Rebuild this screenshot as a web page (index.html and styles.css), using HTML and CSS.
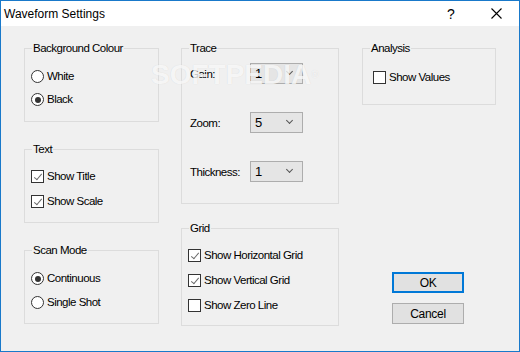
FILE: index.html
```html
<!DOCTYPE html>
<html lang="en">
<head>
    <meta charset="UTF-8">
    <title>Waveform Settings</title>
    <link rel="stylesheet" href="styles.css">
</head>
<body>
    <div class="window">
        <div class="titlebar">
            <span class="title">Waveform Settings</span>
            <span class="help">?</span>
            <span class="close">
                <svg width="11" height="11" viewBox="0 0 11 11">
                    <path d="M0.5 0.5 L10.5 10.5 M10.5 0.5 L0.5 10.5" stroke="#000" stroke-width="1.1" fill="none"/>
                </svg>
            </span>
        </div>

        <div class="content">
            <!-- left column -->
            <div class="col col-left">
                <div class="group group-bg">
                    <span class="group-title">Background Colour</span>
                    <label class="option"><span class="radio"></span>White</label>
                    <label class="option"><span class="radio checked"></span>Black</label>
                </div>
                <div class="group group-text">
                    <span class="group-title">Text</span>
                    <label class="option"><span class="check checked"></span>Show Title</label>
                    <label class="option"><span class="check checked"></span>Show Scale</label>
                </div>
                <div class="group group-scan">
                    <span class="group-title">Scan Mode</span>
                    <label class="option"><span class="radio checked"></span>Continuous</label>
                    <label class="option"><span class="radio"></span>Single Shot</label>
                </div>
            </div>

            <!-- middle column -->
            <div class="col col-mid">
                <div class="group group-trace">
                    <span class="group-title">Trace</span>
                    <div class="field">
                        <span class="field-label">Gain:</span>
                        <span class="select">1</span>
                    </div>
                    <div class="field">
                        <span class="field-label">Zoom:</span>
                        <span class="select">5</span>
                    </div>
                    <div class="field">
                        <span class="field-label">Thickness:</span>
                        <span class="select">1</span>
                    </div>
                </div>
                <div class="group group-grid">
                    <span class="group-title">Grid</span>
                    <label class="option"><span class="check checked"></span>Show Horizontal Grid</label>
                    <label class="option"><span class="check checked"></span>Show Vertical Grid</label>
                    <label class="option"><span class="check"></span>Show Zero Line</label>
                </div>
            </div>

            <!-- right column -->
            <div class="col col-right">
                <div class="group group-analysis">
                    <span class="group-title">Analysis</span>
                    <label class="option"><span class="check"></span>Show Values</label>
                </div>
                <button class="btn btn-default">OK</button>
                <button class="btn">Cancel</button>
            </div>
        </div>

        <div class="watermark">SOFTPEDIA<span class="reg">®</span></div>
    </div>
</body>
</html>
```

FILE: styles.css
```css
body {
    margin: 0;
    background-color: #f0f0f0;
    font-family: "Liberation Sans", Arial, sans-serif;
    font-size: 11.5px;
    letter-spacing: -0.5px;
    color: #000;
}

.window {
    position: relative;
    width: 520px;
    height: 352px;
    box-sizing: border-box;
    border: 1px solid #1979ca;
    background-color: #f0f0f0;
    overflow: hidden;
}

.titlebar {
    height: 25px;
    background-color: #fff;
    display: flex;
    align-items: center;
    letter-spacing: 0;
}

.title {
    font-size: 12px;
    margin-left: 3px;
    flex: 1;
}

.help {
    font-size: 14px;
    width: 12px;
    margin-right: 32px;
}

.close {
    display: flex;
    margin-right: 17px;
}

.content {
    display: flex;
    padding: 22px 0 0 23px;
}

.col {
    display: flex;
    flex-direction: column;
}

.col-left {
    width: 135px;
    gap: 27px;
}

.col-mid {
    width: 158px;
    margin-left: 22px;
    gap: 24px;
}

.col-right {
    width: 134px;
    margin-left: 23px;
}

/* group boxes */
.group {
    position: relative;
    box-sizing: border-box;
    border: 1px solid #dcdcdc;
    display: flex;
    flex-direction: column;
    padding-left: 6px;
}

.group-title {
    position: absolute;
    top: -8px;
    left: 7px;
    padding: 0 1px;
    line-height: 14px;
    background-color: #f0f0f0;
}

.group-bg {
    height: 74px;
    padding-top: 21px;
    gap: 10px;
}

.group-text {
    height: 74px;
    padding-top: 20px;
    gap: 12px;
}

.group-scan {
    height: 74px;
    padding-top: 21px;
    gap: 11px;
}

.group-trace {
    height: 156px;
    padding: 14px 0 0 8px;
    gap: 28px;
}

.group-grid {
    height: 98px;
    padding-top: 20px;
    gap: 12px;
}

.group-analysis {
    height: 57px;
    padding: 22px 0 0 10px;
}

/* radio and check options */
.option {
    display: flex;
    align-items: center;
    height: 13px;
    line-height: 13px;
    gap: 3px;
}

.radio, .check {
    width: 13px;
    height: 13px;
    box-sizing: border-box;
    border: 1px solid #333;
    background-color: #fff;
    flex-shrink: 0;
    position: relative;
}

.radio {
    border-radius: 50%;
}

.radio.checked::after {
    content: "";
    position: absolute;
    left: 2.5px;
    top: 2.5px;
    width: 6px;
    height: 6px;
    border-radius: 50%;
    background-color: #333;
}

.check.checked::after {
    content: "";
    position: absolute;
    left: 3.5px;
    top: 0.5px;
    width: 3px;
    height: 7px;
    border-right: 1.5px solid #6a6a6a;
    border-bottom: 1.5px solid #6a6a6a;
    transform: rotate(40deg);
}

/* trace fields */
.field {
    display: flex;
    align-items: center;
    height: 21px;
}

.field-label {
    width: 60px;
}

.select {
    position: relative;
    box-sizing: border-box;
    width: 53px;
    height: 21px;
    border: 1px solid #adadad;
    background-color: #e5e5e5;
    padding-left: 4px;
    line-height: 19px;
    font-size: 13px;
    letter-spacing: 0;
}

.select::after {
    content: "";
    position: absolute;
    right: 10px;
    top: 5px;
    width: 4px;
    height: 4px;
    border-right: 1px solid #555;
    border-bottom: 1px solid #555;
    transform: rotate(45deg);
}

/* buttons */
.btn {
    box-sizing: border-box;
    width: 72px;
    height: 21px;
    margin-left: 30px;
    border: 1px solid #adadad;
    background-color: #e1e1e1;
    font-family: inherit;
    font-size: 12px;
    letter-spacing: -0.3px;
    padding: 0;
    color: #000;
}

.btn-default {
    margin-top: 167px;
    margin-bottom: 10px;
    border: 2px solid #0078d7;
}

/* faint site watermark over the dialog */
.watermark {
    position: absolute;
    left: 150px;
    top: 60px;
    font-weight: bold;
    font-size: 28px;
    line-height: 28px;
    letter-spacing: 0;
    color: rgba(255, 255, 255, 0.8);
    text-shadow: 0 0 1px rgba(0, 0, 0, 0.12);
    pointer-events: none;
}

.watermark .reg {
    font-size: 10px;
    vertical-align: top;
    font-weight: normal;
}
```
